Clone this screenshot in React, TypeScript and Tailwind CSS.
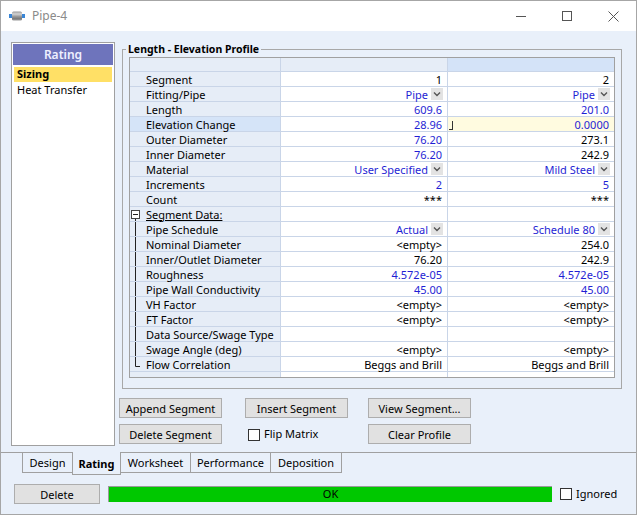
import React from "react";

type Val = {
  t: string;
  blue?: boolean;
  dd?: boolean;
};

type Row = {
  label: string;
  tree?: "box" | "line" | "end";
  hl?: boolean;
  underline?: boolean;
  v1: Val;
  v2: Val;
  edit2?: boolean;
};

const E: Val = { t: "" };
const empty: Val = { t: "<empty>" };

const rows: Row[] = [
  { label: "Segment", v1: { t: "1" }, v2: { t: "2" } },
  { label: "Fitting/Pipe", v1: { t: "Pipe", blue: true, dd: true }, v2: { t: "Pipe", blue: true, dd: true } },
  { label: "Length", v1: { t: "609.6", blue: true }, v2: { t: "201.0", blue: true } },
  { label: "Elevation Change", hl: true, edit2: true, v1: { t: "28.96", blue: true }, v2: { t: "0.0000", blue: true } },
  { label: "Outer Diameter", v1: { t: "76.20", blue: true }, v2: { t: "273.1" } },
  { label: "Inner Diameter", v1: { t: "76.20", blue: true }, v2: { t: "242.9" } },
  { label: "Material", v1: { t: "User Specified", blue: true, dd: true }, v2: { t: "Mild Steel", blue: true, dd: true } },
  { label: "Increments", v1: { t: "2", blue: true }, v2: { t: "5", blue: true } },
  { label: "Count", v1: { t: "***" }, v2: { t: "***" } },
  { label: "Segment Data:", tree: "box", underline: true, v1: E, v2: E },
  { label: "Pipe Schedule", tree: "line", v1: { t: "Actual", blue: true, dd: true }, v2: { t: "Schedule 80", blue: true, dd: true } },
  { label: "Nominal Diameter", tree: "line", v1: empty, v2: { t: "254.0" } },
  { label: "Inner/Outlet Diameter", tree: "line", v1: { t: "76.20" }, v2: { t: "242.9" } },
  { label: "Roughness", tree: "line", v1: { t: "4.572e-05", blue: true }, v2: { t: "4.572e-05", blue: true } },
  { label: "Pipe Wall Conductivity", tree: "line", v1: { t: "45.00", blue: true }, v2: { t: "45.00", blue: true } },
  { label: "VH Factor", tree: "line", v1: empty, v2: empty },
  { label: "FT Factor", tree: "line", v1: empty, v2: empty },
  { label: "Data Source/Swage Type", tree: "line", v1: E, v2: E },
  { label: "Swage Angle (deg)", tree: "line", v1: empty, v2: empty },
  { label: "Flow Correlation", tree: "end", v1: { t: "Beggs and Brill" }, v2: { t: "Beggs and Brill" } },
];

function TreeGlyph({ kind }: { kind?: Row["tree"] }) {
  return (
    <svg width="16" height="14" viewBox="0 0 16 14" className="shrink-0">
      {kind === "box" && (
        <>
          <line x1="5.5" y1="12" x2="5.5" y2="14" stroke="#222" />
          <rect x="1.5" y="3.5" width="8" height="8" fill="#fff" stroke="#444" />
          <line x1="3" y1="7.5" x2="8" y2="7.5" stroke="#222" />
        </>
      )}
      {kind === "line" && <line x1="5.5" y1="0" x2="5.5" y2="14" stroke="#222" />}
      {kind === "end" && (
        <path d="M5.5 0 V9.5 H10" fill="none" stroke="#222" />
      )}
    </svg>
  );
}

function Chevron() {
  return (
    <span className="ml-[3px] flex h-[12px] w-[12px] items-center justify-center bg-[#e3e3e3]">
      <svg width="8" height="6" viewBox="0 0 8 6">
        <path d="M1 1.5 L4 4.5 L7 1.5" fill="none" stroke="#555" strokeWidth="1.4" />
      </svg>
    </span>
  );
}

function ValueCell({ v, last, edit }: { v: Val; last?: boolean; edit?: boolean }) {
  return (
    <div
      className={`flex h-full items-center justify-end border-b border-[#c9d5e8] ${
        last ? "w-[166px]" : "w-[167px] border-r"
      } ${edit ? "bg-[#fffbe0]" : "bg-white"} ${v.dd ? "pr-[4px]" : "pr-[5px]"}`}
    >
      {edit && (
        <span className="mr-auto ml-[1px] mt-[2px] h-[9px] w-[4px] border-r border-b border-[#333]" />
      )}
      <span className={v.blue ? "text-[#1f1fd4]" : "text-black"}>{v.t}</span>
      {v.dd && <Chevron />}
    </div>
  );
}

function Button({ children, w = "w-[103px]" }: { children: React.ReactNode; w?: string }) {
  return (
    <button className={`${w} h-[20px] border border-[#adadad] bg-[#e1e1e1] text-black leading-none`}>
      {children}
    </button>
  );
}

function Check() {
  return <span className="inline-block h-[12px] w-[12px] shrink-0 border border-[#333] bg-white" />;
}

const tabs = [
  { t: "Design", w: "w-[51px]" },
  { t: "Rating", w: "w-[49px]", sel: true },
  { t: "Worksheet", w: "w-[71px]" },
  { t: "Performance", w: "w-[81px]" },
  { t: "Deposition", w: "w-[72px]" },
];

export default function App() {
  return (
    <div
      className="flex h-[515px] w-[637px] flex-col overflow-hidden border border-[#a6a6a6] bg-[#e9f0fa] text-[11px] text-black"
      style={{ fontFamily: '"Noto Sans", "Open Sans", sans-serif' }}
    >
      {/* Title bar */}
      <div className="flex h-[30px] shrink-0 items-center bg-white pl-[8px]">
        <svg width="16" height="12" viewBox="0 0 16 12">
          <rect x="3" y="1.5" width="10" height="9" rx="1.5" fill="#9a9a9a" />
          <rect x="3" y="2.5" width="10" height="3" fill="#c8c8c8" />
          <rect x="3" y="7.5" width="10" height="2" fill="#7d7d7d" />
          <rect x="0" y="4" width="3" height="4" fill="#3a86d6" />
          <rect x="13" y="4" width="3" height="4" fill="#3a86d6" />
        </svg>
        <span className="ml-[7px] text-[12px] text-[#8a8a8a]">Pipe-4</span>
        <div className="ml-auto flex h-full items-center">
          <div className="flex w-[46px] justify-center">
            <span className="h-px w-[10px] bg-[#555]" />
          </div>
          <div className="flex w-[46px] justify-center">
            <span className="h-[10px] w-[10px] border border-[#555]" />
          </div>
          <div className="flex w-[46px] justify-center">
            <svg width="11" height="11" viewBox="0 0 11 11">
              <path d="M0.5 0.5 L10.5 10.5 M10.5 0.5 L0.5 10.5" stroke="#555" strokeWidth="1" />
            </svg>
          </div>
        </div>
      </div>

      {/* Main area */}
      <div className="flex h-[421px] shrink-0">
        {/* Left nav */}
        <div className="ml-[10px] mt-[11px] flex h-[404px] w-[104px] flex-col border border-[#a0a0a0] bg-white p-px">
          <div className="flex h-[21px] items-center justify-center bg-[#6e74bc] text-[12px] font-semibold text-[#eef0ff]">
            Rating
          </div>
          <div className="mx-px mt-[2px] flex h-[15px] items-center bg-[#ffe066] pl-[3px] font-bold">Sizing</div>
          <div className="flex h-[16px] items-center pl-[4px]">Heat Transfer</div>
        </div>

        {/* Right column */}
        <div className="ml-[4px] mt-[10px] flex w-[503px] flex-col">
          <fieldset className="ml-[3px] h-[348px] w-[500px] border border-[#a8a8a8] px-[6px]">
            <legend className="-ml-[3px] px-[2px] text-[10.5px] font-bold leading-[16px]">
              Length - Elevation Profile
            </legend>
            <div className="flex w-[486px] flex-col border border-[#a0a0a0]">
              {/* header */}
              <div className="flex h-[14px] border-b border-[#c9d5e8]">
                <div className="w-[151px] border-r border-[#c9d5e8] bg-[#e6edf7]" />
                <div className="w-[167px] border-r border-[#c9d5e8] bg-[#e6edf7]" />
                <div className="w-[166px] bg-[#d4e3f8]" />
              </div>
              {rows.map((r) => (
                <div key={r.label} className="flex h-[15px] leading-none">
                  <div
                    className={`flex h-full w-[151px] items-center border-r border-b border-[#c9d5e8] ${
                      r.hl ? "bg-[#d5e4f8]" : "bg-[#e6edf7]"
                    }`}
                  >
                    <TreeGlyph kind={r.tree} />
                    <span className={r.underline ? "underline" : ""}>{r.label}</span>
                  </div>
                  <ValueCell v={r.v1} />
                  <ValueCell v={r.v2} last edit={r.edit2} />
                </div>
              ))}
              <div className="flex h-[5px]">
                <div className="w-[151px] border-r border-[#c9d5e8] bg-[#e6edf7]" />
                <div className="w-[167px] border-r border-[#c9d5e8] bg-white" />
                <div className="w-[166px] bg-white" />
              </div>
            </div>
          </fieldset>

          <div className="mt-[9px] flex">
            <Button>Append Segment</Button>
            <div className="ml-[23px]">
              <Button>Insert Segment</Button>
            </div>
            <div className="ml-[20px]">
              <Button>View Segment...</Button>
            </div>
          </div>
          <div className="mt-[6px] flex items-center">
            <Button>Delete Segment</Button>
            <div className="ml-[23px] flex w-[103px] items-center pl-[3px] pt-[1px]">
              <Check />
              <span className="ml-[4px]">Flip Matrix</span>
            </div>
            <div className="ml-[20px]">
              <Button>Clear Profile</Button>
            </div>
          </div>
        </div>
      </div>

      {/* Tabs */}
      <div className="flex h-[22px] shrink-0 items-start border-t border-[#a0a0a0] pl-[21px]">
        {tabs.map((t, i) => (
          <div
            key={t.t}
            className={`${t.w} ${i > 0 ? "-ml-px" : ""} flex items-center justify-center border-x border-b border-[#a0a0a0] bg-[#e9f0fa] pt-[2px] ${
              t.sel ? "relative z-10 -mt-px h-[23px] font-bold" : "h-[20px]"
            }`}
          >
            {t.t}
          </div>
        ))}
      </div>

      {/* Bottom bar */}
      <div className="mt-[10px] flex items-center pl-[13px]">
        <Button w="w-[86px]">Delete</Button>
        <div className="ml-[8px] flex h-[16px] w-[444px] items-center justify-center border-t border-l border-[#9a9a9a] bg-[#00c800]">
          OK
        </div>
        <div className="ml-[8px] flex items-center">
          <Check />
          <span className="ml-[4px]">Ignored</span>
        </div>
      </div>
    </div>
  );
}
